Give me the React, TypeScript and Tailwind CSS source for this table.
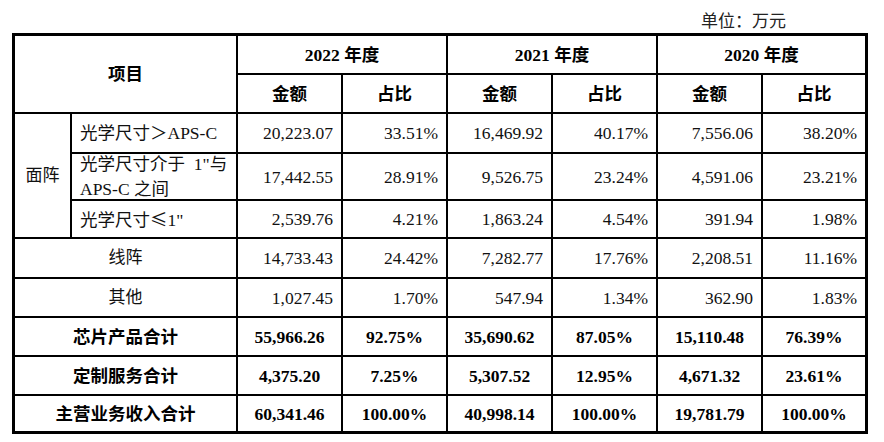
import React from 'react';

const serif = "font-['Liberation_Serif','Noto_Sans_CJK_SC',serif]";
const cjk = "font-['Noto_Sans_CJK_SC',sans-serif]";

type Row = { label: React.ReactNode; vals: string[] };

const faceRows: Row[] = [
  { label: '光学尺寸＞APS-C', vals: ['20,223.07', '33.51%', '16,469.92', '40.17%', '7,556.06', '38.20%'] },
  {
    label: (
      <>
        光学尺寸介于{'\u00a0\u00a0'}1"与
        <br />
        APS-C 之间
      </>
    ),
    vals: ['17,442.55', '28.91%', '9,526.75', '23.24%', '4,591.06', '23.21%'],
  },
  {
    label: (
      <>
        光学尺寸<span className={cjk}>≤</span>1"
      </>
    ),
    vals: ['2,539.76', '4.21%', '1,863.24', '4.54%', '391.94', '1.98%'],
  },
];

const otherRows: Row[] = [
  { label: '线阵', vals: ['14,733.43', '24.42%', '7,282.77', '17.76%', '2,208.51', '11.16%'] },
  { label: '其他', vals: ['1,027.45', '1.70%', '547.94', '1.34%', '362.90', '1.83%'] },
];

const totalRows: Row[] = [
  { label: '芯片产品合计', vals: ['55,966.26', '92.75%', '35,690.62', '87.05%', '15,110.48', '76.39%'] },
  { label: '定制服务合计', vals: ['4,375.20', '7.25%', '5,307.52', '12.95%', '4,671.32', '23.61%'] },
  { label: '主营业务收入合计', vals: ['60,341.46', '100.00%', '40,998.14', '100.00%', '19,781.79', '100.00%'] },
];

const years = ['2022', '2021', '2020'];

function Num({ v }: { v: string }) {
  return <div className="flex items-center justify-end bg-white pr-[8px] text-[17.5px] text-[#111]">{v}</div>;
}

function BoldCell({ children, className = '' }: { children: React.ReactNode; className?: string }) {
  return (
    <div className={`flex items-center justify-center bg-white text-[17.5px] font-bold text-black ${className}`}>
      {children}
    </div>
  );
}

export default function App() {
  return (
    <div className={`h-[442px] w-[884px] bg-white pl-[12px] leading-[22px] ${serif}`}>
      <div className="flex h-[33px] items-end justify-end pr-[98px] text-[17px] text-[#222]">
        单位：万元
      </div>
      <div className="grid w-[856px] grid-cols-[55px_164px_103px_103px_103px_103px_103px_102px] grid-rows-[37px_37px_38px_45px_36px_38px_37px_37px_37px_35px] gap-[2px] bg-black p-[3px]">
        <BoldCell className="col-span-2 row-span-2">项目</BoldCell>
        {years.map((y) => (
          <BoldCell key={y} className="col-span-2">
            {y} 年度
          </BoldCell>
        ))}
        {years.map((y) => (
          <React.Fragment key={y}>
            <BoldCell>金额</BoldCell>
            <BoldCell>占比</BoldCell>
          </React.Fragment>
        ))}

        <div className="row-span-3 flex items-center justify-center bg-white text-[17px] text-[#111]">面阵</div>
        {faceRows.map((r, i) => (
          <React.Fragment key={i}>
            <div className="flex items-center bg-white pl-[8px] text-[17.5px] leading-[25px] text-[#111]">
              <span>{r.label}</span>
            </div>
            {r.vals.map((v, j) => (
              <Num key={j} v={v} />
            ))}
          </React.Fragment>
        ))}

        {otherRows.map((r, i) => (
          <React.Fragment key={i}>
            <div className="col-span-2 flex items-center justify-center bg-white text-[17px] text-[#111]">
              {r.label}
            </div>
            {r.vals.map((v, j) => (
              <Num key={j} v={v} />
            ))}
          </React.Fragment>
        ))}

        {totalRows.map((r, i) => (
          <React.Fragment key={i}>
            <BoldCell className="col-span-2">{r.label}</BoldCell>
            {r.vals.map((v, j) => (
              <BoldCell key={j}>{v}</BoldCell>
            ))}
          </React.Fragment>
        ))}
      </div>
    </div>
  );
}
